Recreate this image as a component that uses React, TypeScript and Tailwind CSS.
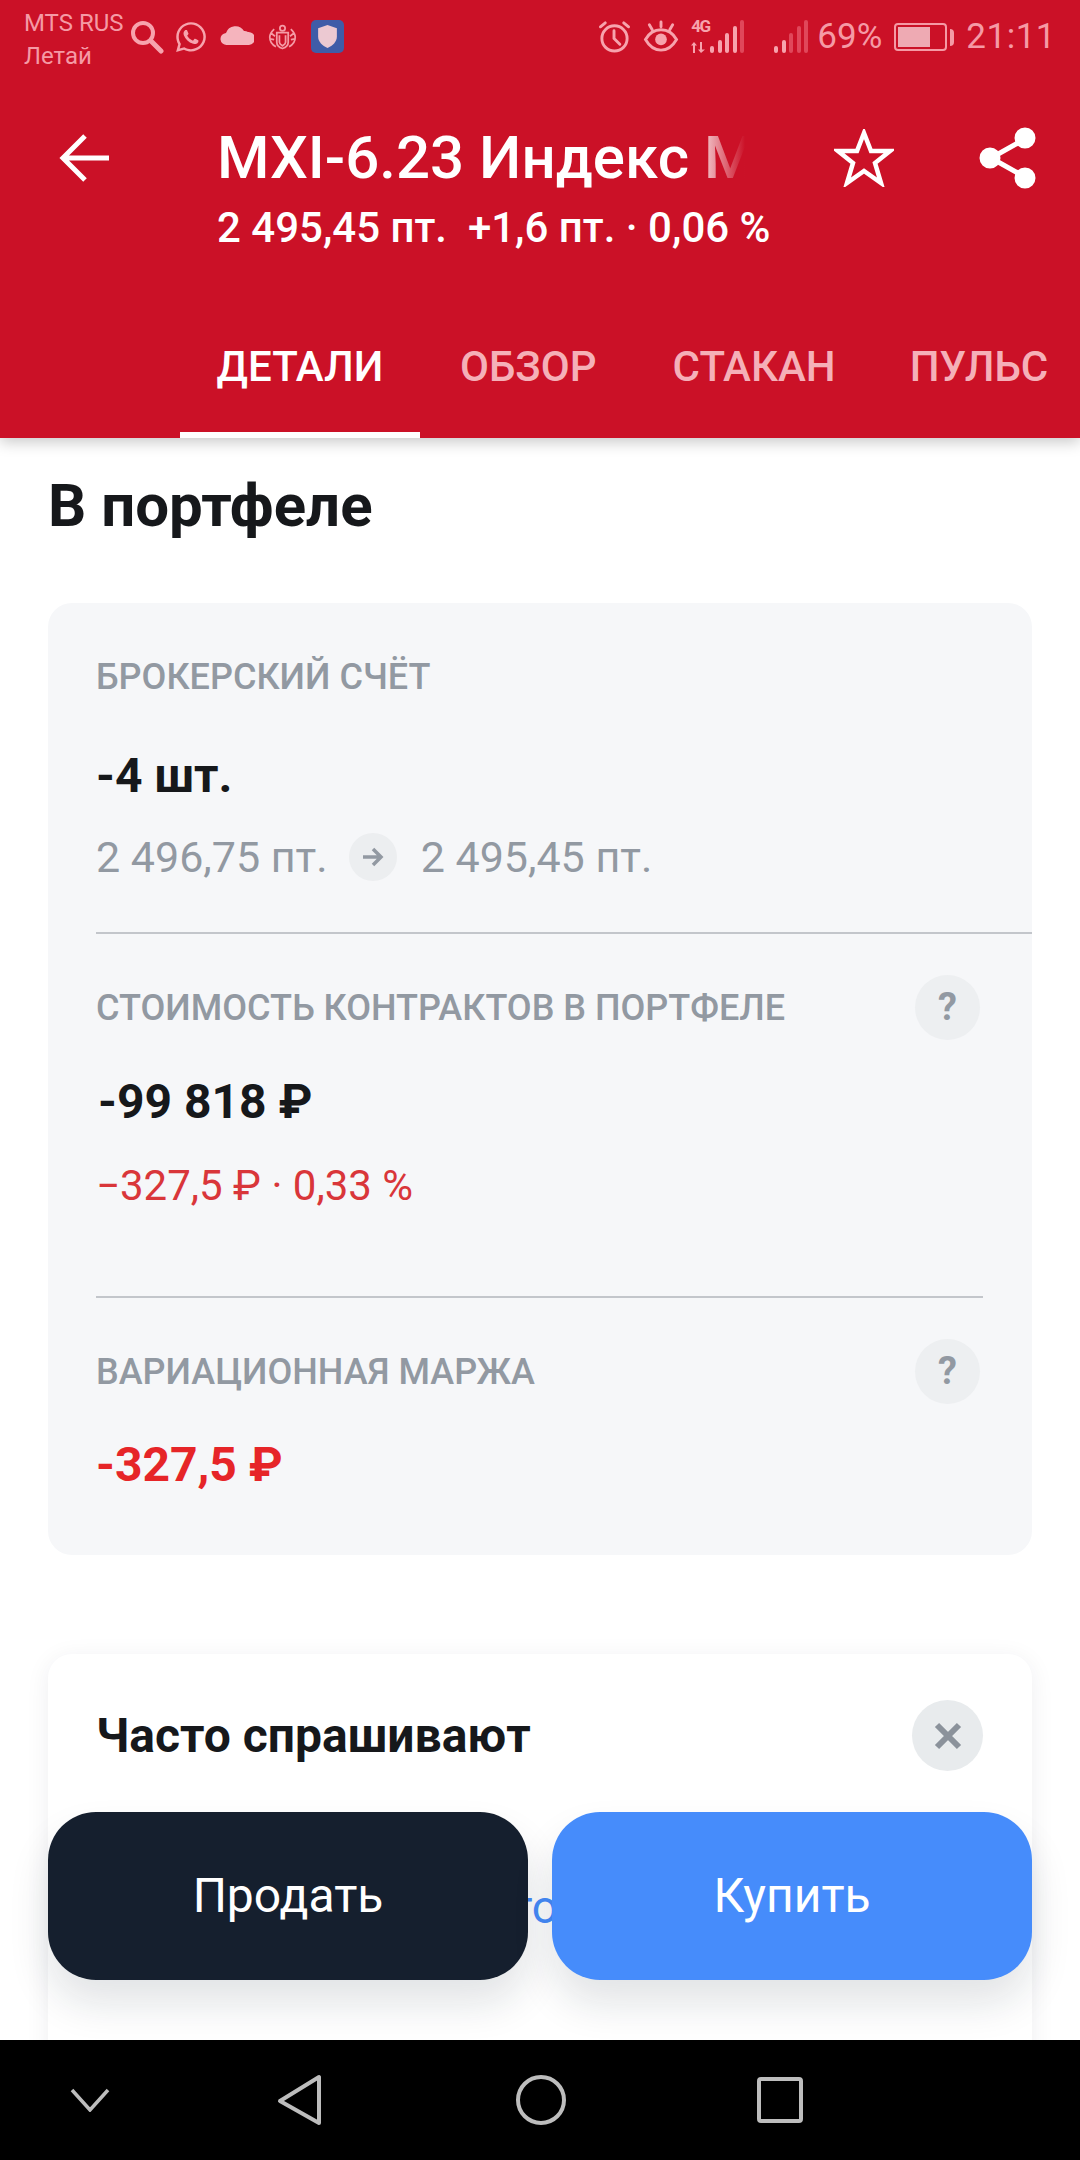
import { FaWhatsapp } from 'react-icons/fa'

function Bars({ level }: { level: number }) {
  const heights = [7, 13, 20, 27, 33]
  return (
    <div className="flex items-end gap-[3.5px]">
      {heights.map((h, i) => (
        <div
          key={i}
          className={i < level ? 'w-[4px] rounded-sm bg-[#f7a3ad]' : 'w-[4px] rounded-sm bg-[#e0475a]'}
          style={{ height: h }}
        />
      ))}
    </div>
  )
}

function StatusBar() {
  return (
    <div className="h-[74px] flex text-[#f59aa5]">
      <div className="ml-[24px] w-[106px] pt-[7px] text-[24px] leading-[33px] whitespace-nowrap">
        <div>MTS RUS</div>
        <div>Летай</div>
      </div>
      <div className="flex items-start pt-[20px]">
        <svg width="34" height="34" viewBox="0 0 34 34" fill="none" stroke="#f7a3ad" strokeWidth="4" strokeLinecap="round">
          <circle cx="13" cy="13" r="10" />
          <path d="M21 21l10 10" strokeWidth="5" />
        </svg>
        <FaWhatsapp className="ml-[10px] text-[#f7a3ad]" size={34} />
        <svg className="ml-[12px] mt-[6px]" width="34" height="20" viewBox="0 0 34 20" fill="#f5b4bd">
          <path d="M7 19a6 6 0 0 1-1-12 10 10 0 0 1 18-2 7 7 0 0 1 4 1 6.500 6.500 0 0 1 1 13z" />
        </svg>
        <svg className="ml-[12px] mt-[3px]" width="33" height="29" viewBox="0 0 33 33" fill="none" stroke="#f59aa5" strokeWidth="2">
          <circle cx="16.500" cy="6" r="3" />
          <path d="M10 11h13v11c0 4-3 6-6.500 7C13 28 10 26 10 22z" />
          <path d="M13 14v8c0 2 2 3 3.500 4 1.500-1 3.500-2 3.500-4v-8" />
          <path d="M7 7C4 10 2 13 2 16c0 5 3 9 7 11M26 7c3 3 5 6 5 9 0 5-3 9-7 11M4 12l4 3M2 18l5 1M29 12l-4 3M31 18l-5 1" />
        </svg>
        <div className="ml-[12px] w-[33px] h-[33px] rounded-[5px] bg-[#3f5ca8] flex items-center justify-center">
          <svg width="21" height="25" viewBox="0 0 20 24" fill="#ecc9d2">
            <path d="M10 1l9 3v8c0 5-4 9-9 11-5-2-9-6-9-11V4z" />
          </svg>
        </div>
      </div>
      <div className="ml-auto mr-[24px] flex items-start pt-[16px]">
        <svg className="mt-[4px]" width="33" height="33" viewBox="0 0 33 34" fill="none" stroke="#f7a3ad" strokeWidth="3" strokeLinecap="round">
          <circle cx="16.500" cy="19" r="13" />
          <path d="M16 11v8l6 6M2 7l5-4M31 7l-5-4" />
        </svg>
        <svg className="ml-[12px] mt-[4px]" width="36" height="33" viewBox="0 0 36 34" fill="none" stroke="#f7a3ad" strokeWidth="3" strokeLinecap="round">
          <path d="M2 20c4-7 9-10 16-10s12 3 16 10c-4 7-9 11-16 11S6 27 2 20z" />
          <circle cx="18" cy="20" r="6" fill="#f7a3ad" stroke="none" />
          <path d="M18 2v5M6 5l3 5M30 5l-3 5" />
        </svg>
        <div className="ml-[12px] mt-[2px] w-[17px] text-[#f7a3ad]">
          <div className="text-[17px] leading-[17px] font-bold tracking-[-1.5px] whitespace-nowrap">4G</div>
          <svg className="mt-[7px]" width="17" height="11" viewBox="0 0 17 11" fill="#f7a3ad">
            <path d="M3 0L0 3.500h2V11h2V3.500h2zM9 0h2v7.500h3L10 11 7 7.500h2z" />
          </svg>
        </div>
        <div className="ml-[2px] mt-[4px] h-[33px] flex items-end">
          <Bars level={4} />
        </div>
        <div className="ml-[30px] mt-[4px] h-[33px] flex items-end">
          <Bars level={2} />
        </div>
        <div className="ml-[9px] text-[35px] leading-[42px]">69%</div>
        <div className="ml-[12px] mt-[7px] flex items-center">
          <div className="w-[53px] h-[28px] rounded-[4px] border-2 border-[#f59aa5] p-[2px]">
            <div className="w-[32px] h-full bg-[#eeaab3]" />
          </div>
          <div className="ml-[3px] w-[4px] h-[17px] rounded-r-sm bg-[#f59aa5]" />
        </div>
        <div className="ml-[12px] text-[35px] leading-[42px] tracking-[0.5px]">21:11</div>
      </div>
    </div>
  )
}

function Header() {
  return (
    <div className="relative z-10 h-[438px] shrink-0 bg-[#cb1127] text-white shadow-[0_4px_14px_rgba(0,0,0,0.22)]">
      <StatusBar />
      <div className="flex h-[74px] mt-[47px] items-center">
        <svg className="ml-[58px]" width="54" height="50" viewBox="0 0 54 50" fill="none" stroke="white" strokeWidth="5">
          <path d="M51 25H6M27 3L5 25l22 22" />
        </svg>
        <div className="relative ml-[105px] w-[528px] overflow-hidden text-[60px] leading-[74px] font-medium whitespace-nowrap">
          MXI-6.23 Индекс Мосбиржи
          <div className="absolute inset-y-0 right-0 w-[40px] bg-gradient-to-r from-[#cb112740] to-[#cb1127]" />
        </div>
        <svg className="ml-[89px]" width="60" height="58" viewBox="0 0 60 58" fill="none" stroke="white" strokeWidth="4.500" strokeLinejoin="miter">
          <path d="M30 4l7 18h19L41 34l6 20-17-12-17 12 6-20L4 22h19z" />
        </svg>
        <svg className="ml-[85px]" width="58" height="62" viewBox="0 0 58 62" fill="white" stroke="white" strokeWidth="5">
          <path d="M46 12L12 31l34 19" fill="none" />
          <circle cx="46" cy="11" r="8" />
          <circle cx="11" cy="31" r="8" />
          <circle cx="46" cy="51" r="8" />
        </svg>
      </div>
      <div className="ml-[217px] mt-[8px] text-[42px] leading-[50px] font-medium whitespace-pre">
        2 495,45 пт.  +1,6 пт. · 0,06 %
      </div>
      <div className="flex mt-[79px] pl-[180px] text-[42px] leading-[70px] font-medium">
        <div className="w-[240px] h-[106px] text-center border-b-[6px] border-white">ДЕТАЛИ</div>
        <div className="ml-[40px] text-[#f5b0b8]">ОБЗОР</div>
        <div className="ml-[76px] text-[#f5b0b8]">СТАКАН</div>
        <div className="ml-[74px] text-[#f5b0b8]">ПУЛЬС</div>
      </div>
    </div>
  )
}

function Hint() {
  return (
    <div className="w-[65px] h-[65px] rounded-full bg-[#edeff1] flex items-center justify-center text-[38px] font-bold text-[#9299a2]">
      ?
    </div>
  )
}

function Label({ children }: { children: string }) {
  return <div className="text-[36px] leading-[44px] font-medium text-[#9299a2]">{children}</div>
}

function PortfolioCard() {
  return (
    <div className="mx-[48px] mt-[62px] h-[952px] rounded-[24px] bg-[#f6f7f9] pl-[48px]">
      <div className="pt-[52px]">
        <Label>БРОКЕРСКИЙ СЧЁТ</Label>
      </div>
      <div className="mt-[49px] text-[48px] leading-[56px] font-bold text-[#16181b]">-4 шт.</div>
      <div className="mt-[29px] flex items-center text-[43px] leading-[48px] text-[#9299a2]">
        <span>2 496,75 пт.</span>
        <div className="ml-[21px] w-[48px] h-[48px] rounded-full bg-[#eceef0] flex items-center justify-center">
          <svg width="22" height="20" viewBox="0 0 22 20" fill="none" stroke="#9299a2" strokeWidth="3.500">
            <path d="M1 10h18M11 2l8 8-8 8" />
          </svg>
        </div>
        <span className="ml-[24px]">2 495,45 пт.</span>
      </div>
      <div className="mt-[51px] h-[2px] bg-[#c3c6cb]" />
      <div className="mt-[41px] h-[65px] flex items-center justify-between pr-[52px]">
        <Label>СТОИМОСТЬ КОНТРАКТОВ В ПОРТФЕЛЕ</Label>
        <Hint />
      </div>
      <div className="mt-[34px] pl-[2px] text-[48px] leading-[56px] font-bold text-[#16181b]">-99 818 ₽</div>
      <div className="mt-[32px] text-[42px] leading-[48px] text-[#d9363a]">−327,5 ₽ · 0,33 %</div>
      <div className="mt-[86px] mr-[49px] h-[2px] bg-[#c3c6cb]" />
      <div className="mt-[41px] h-[65px] flex items-center justify-between pr-[52px]">
        <Label>ВАРИАЦИОННАЯ МАРЖА</Label>
        <Hint />
      </div>
      <div className="mt-[33px] text-[48px] leading-[56px] font-bold text-[#e62528]">-327,5 ₽</div>
    </div>
  )
}

function FaqCard() {
  return (
    <div className="mx-[48px] mt-[99px] h-[500px] rounded-[24px] bg-white shadow-[0_4px_24px_rgba(20,30,50,0.07)] pl-[48px] pr-[49px]">
      <div className="pt-[46px] flex items-center justify-between">
        <div className="text-[48px] leading-[70px] font-bold text-[#16181b]">Часто спрашивают</div>
        <div className="w-[71px] h-[71px] rounded-full bg-[#e8ebed] flex items-center justify-center">
          <svg width="30" height="30" viewBox="0 0 30 30" fill="none" stroke="#8b929b" strokeWidth="6">
            <path d="M4 4l22 22M26 4L4 26" />
          </svg>
        </div>
      </div>
      <div className="mt-[111px] text-right pr-[425px] text-[46px] leading-[50px] text-[#468cfb]">Что</div>
    </div>
  )
}

function NavBar() {
  return (
    <div className="relative z-10 h-[120px] shrink-0 bg-black flex items-center">
      <svg className="ml-[70px]" width="40" height="24" viewBox="0 0 40 24" fill="none" stroke="#bdbdbd" strokeWidth="3.500">
        <path d="M2 2l18 20L38 2" />
      </svg>
      <svg className="ml-[167px]" width="46" height="52" viewBox="0 0 46 52" fill="none" stroke="#bdbdbd" strokeWidth="4" strokeLinejoin="round">
        <path d="M42 3v46L3 27z" />
      </svg>
      <svg className="ml-[192px]" width="52" height="52" viewBox="0 0 52 52" fill="none" stroke="#bdbdbd" strokeWidth="4">
        <circle cx="26" cy="26" r="23" />
      </svg>
      <svg className="ml-[190px]" width="46" height="46" viewBox="0 0 46 46" fill="none" stroke="#bdbdbd" strokeWidth="4">
        <rect x="2" y="2" width="42" height="42" rx="2" />
      </svg>
    </div>
  )
}

export default function App() {
  return (
    <div className="w-[1080px] h-[2160px] flex flex-col overflow-hidden bg-white font-['Roboto',sans-serif]">
      <Header />
      <div className="relative flex-1 overflow-hidden">
        <h1 className="ml-[48px] mt-[33px] text-[60px] leading-[70px] font-bold text-[#16181b]">В портфеле</h1>
        <PortfolioCard />
        <FaqCard />
        <div className="absolute left-[48px] right-[48px] bottom-[60px] flex gap-[24px] text-[48px] text-white">
          <button className="flex-1 h-[168px] rounded-[48px] bg-[#151f2e] shadow-[0_24px_40px_rgba(20,30,50,0.12)]">Продать</button>
          <button className="flex-1 h-[168px] rounded-[48px] bg-[#468cfb] shadow-[0_24px_40px_rgba(20,30,50,0.12)]">Купить</button>
        </div>
      </div>
      <NavBar />
    </div>
  )
}
